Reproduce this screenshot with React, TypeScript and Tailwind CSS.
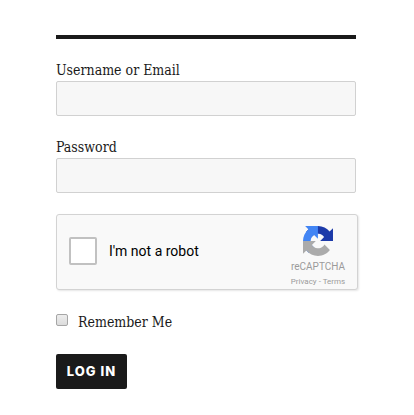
import { useState } from "react";

const labelClass =
  "block whitespace-nowrap font-['DejaVu_Serif_Condensed','DejaVu_Serif',serif] text-[14px] leading-[22px] text-[#1a1a1a]";

const inputClass =
  "block h-[35px] w-[300px] rounded-[2px] border border-[#d1d1d1] bg-[#f7f7f7] px-2 text-sm outline-none";

const RecaptchaLogo = () => (
  <svg viewBox="0 0 64 64" className="h-[30px] w-[30px]">
    <path
      fill="#1c3aa9"
      d="M64 31.955l-.033-1.37V4.687l-7.16 7.16C50.948 4.674 42.033.093 32.05.093c-10.4 0-19.622 4.96-25.458 12.64l11.736 11.86a15.55 15.55 0 0 1 4.754-5.334c2.05-1.6 4.952-2.906 8.968-2.906.485 0 .86.057 1.135.163 4.976.393 9.288 3.14 11.828 7.124l-8.307 8.307L64 31.953"
    />
    <path
      fill="#4285f4"
      d="M31.862.094l-1.37.033H4.594l7.16 7.16C4.58 13.147 0 22.06 0 32.046c0 10.4 4.96 19.622 12.64 25.458L24.5 45.768a15.55 15.55 0 0 1-5.334-4.754c-1.6-2.05-2.906-4.952-2.906-8.968 0-.485.057-.86.163-1.135.393-4.976 3.14-9.288 7.124-11.828l8.307 8.307L31.86.095"
    />
    <path
      fill="#ababab"
      d="M.001 32.045l.033 1.37v25.898l7.16-7.16c5.86 7.173 14.774 11.754 24.76 11.754 10.4 0 19.622-4.96 25.458-12.64l-11.736-11.86a15.55 15.55 0 0 1-4.754 5.334c-2.05 1.6-4.952 2.906-8.968 2.906-.485 0-.86-.057-1.135-.163-4.976-.393-9.288-3.14-11.828-7.124l8.307-8.307c-10.522.04-22.4.066-27.295-.005"
    />
  </svg>
);

const Recaptcha = () => (
  <div className="mt-[21px] flex h-[76px] w-[302px] rounded-[3px] border border-[#d3d3d3] bg-[#f9f9f9] font-[Roboto,sans-serif] shadow-[1px_1px_2px_rgba(0,0,0,0.1)]">
    <div className="flex flex-1 items-center pb-[3px] pl-3">
      <button
        type="button"
        aria-label="I'm not a robot"
        className="h-7 w-7 rounded-[2px] border-2 border-[#c1c1c1] bg-white"
      />
      <span className="ml-3 whitespace-nowrap text-sm text-black">
        I'm not a robot
      </span>
    </div>
    <div className="mr-[9px] flex w-[60px] flex-col items-center pt-[11px] text-[#9b9b9b]">
      <RecaptchaLogo />
      <span className="mt-[5px] text-[10px] leading-[12px]">reCAPTCHA</span>
      <span className="mt-1 whitespace-nowrap text-[8px] leading-[10px]">
        Privacy - Terms
      </span>
    </div>
  </div>
);

export default function App() {
  const [remember, setRemember] = useState(false);

  return (
    <div className="h-[415px] w-[414px] bg-white pl-14 pt-[35px]">
      <form className="w-[302px]" onSubmit={(e) => e.preventDefault()}>
        <div className="h-1 w-[300px] bg-[#1a1a1a]" />

        <label htmlFor="user" className={`${labelClass} mt-5`}>
          Username or Email
        </label>
        <input id="user" type="text" className={inputClass} />

        <label htmlFor="pass" className={`${labelClass} mt-5`}>
          Password
        </label>
        <input id="pass" type="password" className={inputClass} />

        <Recaptcha />

        {/* Remember me */}
        <div className="mt-[21px] flex h-[22px] items-center">
          <input
            id="remember"
            type="checkbox"
            checked={remember}
            onChange={(e) => setRemember(e.target.checked)}
            className="mr-[10px] mb-[5px] h-3 w-3 appearance-none rounded-[2px] border border-[#a6a6a6] bg-linear-to-b from-[#ededed] to-[#dcdcdc] checked:bg-[#1a1a1a]"
          />
          <label htmlFor="remember" className={labelClass}>
            Remember Me
          </label>
        </div>

        <button
          type="submit"
          className="mt-[21px] flex h-[35px] w-[71px] items-center justify-center rounded-[2px] bg-[#1a1a1a] font-[Inter,sans-serif] text-[13px] font-extrabold tracking-[1px] whitespace-nowrap text-white"
        >
          LOG IN
        </button>
      </form>
    </div>
  );
}
